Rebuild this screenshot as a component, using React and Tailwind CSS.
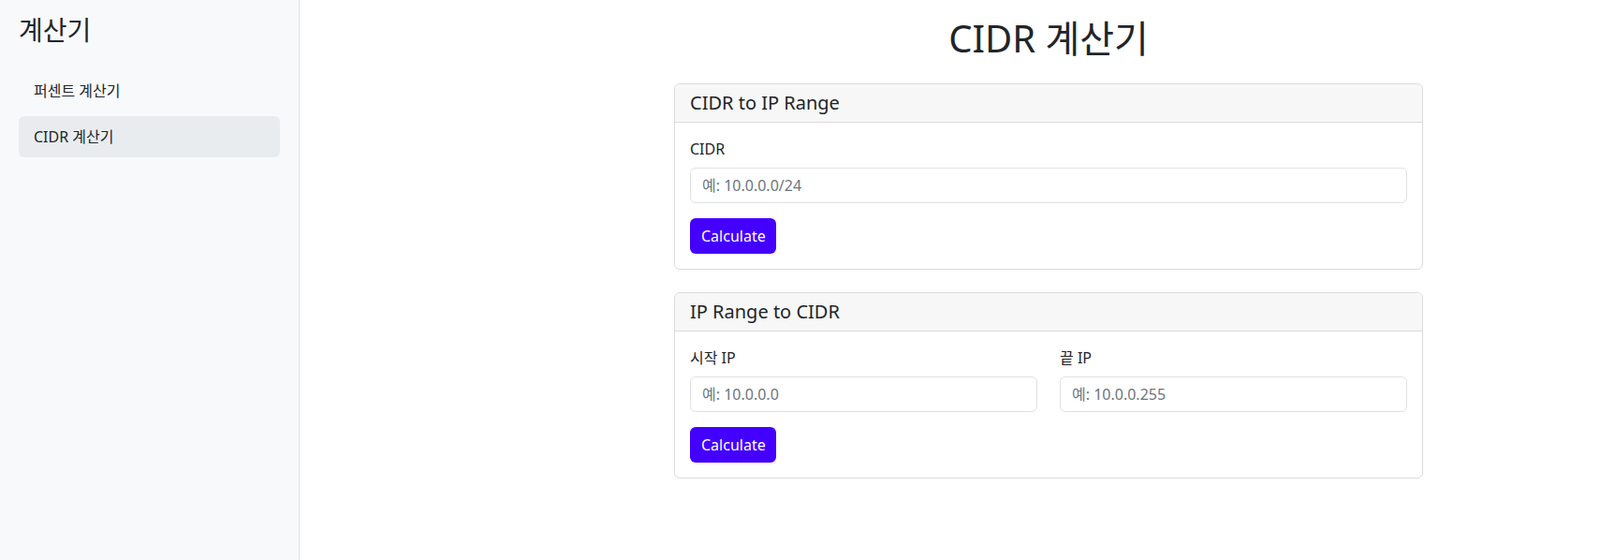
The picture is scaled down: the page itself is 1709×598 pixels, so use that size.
import { useState } from "react";

const inputCls =
  "block w-full h-[38px] rounded-md border border-[#dee2e6] bg-white px-3 py-1.5 text-base leading-6 text-[#212529] placeholder:text-[#6c757d] outline-none";

const btnCls =
  "h-[38px] w-[92px] rounded-md bg-[#4400ff] px-3 text-base leading-6 text-white";

function Card({ title, children }) {
  return (
    <div className="mb-6 rounded-md border border-[#dcdcdc] bg-white">
      <div className="h-[41px] border-b border-[#dcdcdc] bg-[#f7f7f7] px-4 py-2 text-[20px] leading-6 rounded-t-md">
        {title}
      </div>
      <div className="p-4">{children}</div>
    </div>
  );
}

export default function App() {
  const [active, setActive] = useState("cidr");
  const [cidr, setCidr] = useState("");
  const [startIp, setStartIp] = useState("");
  const [endIp, setEndIp] = useState("");

  const menu = [
    { id: "percent", label: "퍼센트 계산기" },
    { id: "cidr", label: "CIDR 계산기" },
  ];

  return (
    <div className="flex min-h-[598px] font-['Noto_Sans','Noto_Sans_CJK_KR',sans-serif] text-[#212529]">
      {/* Sidebar */}
      <aside className="w-[320px] shrink-0 border-r border-[#dee2e6] bg-[#f8f9fa] px-5 pt-4">
        <h3 className="mb-[25px] text-[28px] leading-[1.2]">계산기</h3>
        <nav className="flex flex-col gap-[5px]">
          {menu.map((item) => (
            <a
              key={item.id}
              href="#"
              onClick={(e) => {
                e.preventDefault();
                setActive(item.id);
              }}
              className={`block h-[44px] rounded-md px-4 py-2.5 text-base leading-6 ${
                active === item.id ? "bg-[#e9ecef]" : ""
              }`}
            >
              {item.label}
            </a>
          ))}
        </nav>
      </aside>

      {/* Main */}
      <main className="flex-1 pl-[400px] pt-[17px]">
        <div className="w-[800px]">
          <h1 className="mb-6 text-center text-[40px] leading-[48px]">CIDR 계산기</h1>

          <Card title="CIDR to IP Range">
            <label className="mb-2 block leading-6">CIDR</label>
            <input
              className={inputCls}
              placeholder="예: 10.0.0.0/24"
              value={cidr}
              onChange={(e) => setCidr(e.target.value)}
            />
            <button className={`mt-4 ${btnCls}`}>Calculate</button>
          </Card>

          <Card title="IP Range to CIDR">
            <div className="grid grid-cols-2 gap-6">
              <div>
                <label className="mb-2 block leading-6">시작 IP</label>
                <input
                  className={inputCls}
                  placeholder="예: 10.0.0.0"
                  value={startIp}
                  onChange={(e) => setStartIp(e.target.value)}
                />
              </div>
              <div>
                <label className="mb-2 block leading-6">끝 IP</label>
                <input
                  className={inputCls}
                  placeholder="예: 10.0.0.255"
                  value={endIp}
                  onChange={(e) => setEndIp(e.target.value)}
                />
              </div>
            </div>
            <button className={`mt-4 ${btnCls}`}>Calculate</button>
          </Card>
        </div>
      </main>
    </div>
  );
}
